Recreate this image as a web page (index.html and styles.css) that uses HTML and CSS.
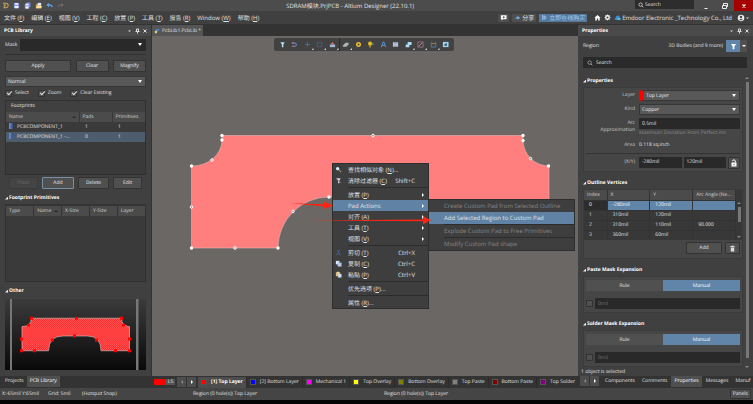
FILE: index.html
```html
<!DOCTYPE html>
<html lang="zh-CN">
<head>
<meta charset="utf-8">
<title>SDRAM模块.PrjPCB - Altium Designer (22.10.1)</title>
<link rel="stylesheet" href="styles.css">
</head>
<body>
<header class="titlebar">
  <div class="quick">
    <svg viewBox="0 0 8 8"><path d="M1 1.500h3.500a2.500 2.500 0 0 1 0 5H2M2 3.500h2.500M2 6.500l1.500-3" fill="none" stroke="#c8a45c" stroke-width="1.200"/></svg>
    <svg viewBox="0 0 8 8"><path d="M1 1h6v6H1z" fill="#8d9be0"/><path d="M2.500 1h3v2h-3zM2 4.500h4V7H2z" fill="#eef0ff"/></svg>
    <svg viewBox="0 0 8 8"><path d="M2.500 0.500h5v5h-5z" fill="#7483cc"/><path d="M1 2h5v5.500H1z" fill="#9daaf0"/><path d="M2 2h3v1.500H2zM2 5h3v2.500H2z" fill="#eef0ff"/></svg>
    <svg viewBox="0 0 8 8"><path d="M1 2.500h2l1 1h3V7H1z" fill="#d9a648"/><path d="M3 1h4v3H3z" fill="#dceaff"/><path d="M2 4.500h6L7 7H1z" fill="#ffe1a0"/></svg>
    <svg viewBox="0 0 8 8"><path d="M1.500 3.500h3.500q2 0 2 2.500" fill="none" stroke="#5fa8e8" stroke-width="1.300"/><path d="M0.500 3.500 3.500 1v5z" fill="#5fa8e8"/></svg>
    <svg viewBox="0 0 8 8"><path d="M6.500 3.500H3.500q-2 0-2 2" fill="none" stroke="#777" stroke-width="1"/><path d="M7.500 3.500 5 1.500v4z" fill="#777"/></svg>
  </div>
  <h1>SDRAM模块.PrjPCB - Altium Designer (22.10.1)</h1>
  <div class="title-right">
    <label class="title-search"><svg viewBox="0 0 8 8"><circle cx="3.500" cy="3.500" r="2.300" fill="none" stroke="#ddd"/><path d="m5.200 5.200 2 2" stroke="#ddd"/></svg><input type="text" placeholder="Search" aria-label="Search"></label>
    <button class="win" aria-label="Minimize"><svg viewBox="0 0 8 8"><path d="M2.500 6.500h3" stroke="#eee"/></svg></button>
    <button class="win" aria-label="Restore"><svg viewBox="0 0 8 8"><path d="M2.500 3V1.500h4V4.500H5M1.500 3.500h4v3h-4z" fill="none" stroke="#eee"/></svg></button>
    <button class="win close" aria-label="Close"><svg viewBox="0 0 8 8"><path d="m2.500 2.500 3 3m0-3-3 3" stroke="#fff" stroke-width="1.100"/></svg></button>
  </div>
</header>

<nav class="menubar">
  <div class="menus">
    <a href="#">文件 (<u>F</u>)</a><a href="#">编辑 (<u>E</u>)</a><a href="#">视图 (<u>V</u>)</a><a href="#">工程 (<u>C</u>)</a><a href="#">放置 (<u>P</u>)</a><a href="#">工具 (<u>T</u>)</a><a href="#">报告 (<u>R</u>)</a><a href="#">Window (<u>W</u>)</a><a href="#">帮助 (<u>H</u>)</a>
  </div>
  <div class="account">
    <button class="chip" aria-label="Comment"><svg viewBox="0 0 8 8"><path d="M1 1.500h6.500V6h-4L2 7.500V6H1z" fill="#fff"/><path d="M4.200 2.500v2.600M3 3.800h2.500" stroke="#444" stroke-width=".8"/></svg></button>
    <button class="chip"><svg viewBox="0 0 8 8"><path d="M1 5.500q1-2 3-2V2l3 2.500L4 6.500V5.200z" fill="#76aee6"/></svg>分享</button>
    <button class="chip buy"><svg viewBox="0 0 8 8"><path d="M2 1v6M3.500 2l2.500 2-2.500 2z" fill="none" stroke="#a9cff3"/></svg>立即在线购买</button>
    <svg class="glyph home" viewBox="0 0 8 8"><path d="M4 1 7.500 4.300H6.500V7.500H4.700V5.200H3.300v2.300H1.500V4.300H.5z" fill="#fff"/></svg>
    <svg class="glyph" viewBox="0 0 8 8"><circle cx="4" cy="4" r="2" fill="none" stroke="#fff" stroke-width="1.500"/><path d="M4 .7v1M4 6.300v1M.7 4h1M6.300 4h1M1.700 1.700l.7.7M5.600 5.600l.7.7M6.300 1.700l-.7.7M2.400 5.600l-.7.7" stroke="#fff"/></svg>
    <a class="company" href="#"><svg viewBox="0 0 8 8"><path d="M1 6.500q-.8-1.500 1-2.500Q2.500 1.500 5 1.800q1.500.3 1.500 2 1.500.7 1 2.700z" fill="#3b8fe0"/><path d="M3 6.500Q4 3.500 7.500 5v1.500z" fill="#62d0b1"/></svg>Emdoor Electronic _Technology Co., Ltd</a>
    <button class="user" aria-label="User"><svg viewBox="0 0 12 8"><circle cx="4" cy="4" r="3.300" fill="#eee"/><circle cx="4" cy="3" r="1.200" fill="#444"/><path d="M2 6.200q2-2.400 4 0z" fill="#444"/><path d="M9 3.500h3L10.500 5z" fill="#ddd"/></svg></button>
  </div>
</nav>

<main class="workspace">
  <aside class="panel left">
    <header class="panel-head"><h2>PCB Library</h2><svg class="tools" viewBox="0 0 20 8"><path d="M1 3.500h3L2.500 5z" fill="#ddd"/><path d="M9.500 2h2v2.500h-2zM8.500 4.500h4M10.500 4.500V6.500M16.500 2.500l3 3m0-3-3 3" fill="none" stroke="#ddd"/></svg></header>
    <div class="left-body">
      <div class="mask"><label for="mask">Mask</label><span class="select dark"><select id="mask"><option></option></select></span></div>
      <div class="btns top"><button class="btn wide">Apply</button><button class="btn">Clear</button><button class="btn">Magnify</button></div>
      <span class="select"><select aria-label="Mode"><option>Normal</option></select></span>
      <div class="checks"><label><input type="checkbox" checked>Select</label><label><input type="checkbox" checked>Zoom</label><label><input type="checkbox" checked>Clear Existing</label></div>
      <section class="footprints">
        <h3>Footprints</h3>
        <table class="fp">
          <thead><tr><th><i class="sort"></i>Name</th><th>Pads</th><th>Primitives</th></tr></thead>
          <tbody>
            <tr><td><i class="chip-icon"></i>PCBCOMPONENT_1</td><td>1</td><td>1</td></tr>
            <tr class="on"><td><i class="chip-icon"></i>PCBCOMPONENT_1 -...</td><td>0</td><td>1</td></tr>
          </tbody>
        </table>
      </section>
      <div class="btns edit"><button class="btn" disabled>Place</button><button class="btn focus">Add</button><button class="btn">Delete</button><button class="btn">Edit</button></div>
      <h3 class="section">Footprint Primitives</h3>
      <div class="primitives">
        <table class="prim"><thead><tr><th>Type</th><th><i class="sort"></i>Name</th><th>X-Size</th><th>Y-Size</th><th>Layer</th></tr></thead></table>
      </div>
      <h3 class="section">Other</h3>
      <svg class="preview" viewBox="5 298 141 72" preserveAspectRatio="none">
        <defs>
          <linearGradient id="pg" x2="0" y2="1"><stop stop-color="#3b3b3b"/><stop offset="1" stop-color="#090909"/></linearGradient>
          <pattern id="hatch" width="2" height="2" patternUnits="userSpaceOnUse"><path d="M0 0h2v2H0z" fill="#ff0b0b"/><path d="M0 0h1v1H0zM1 1h1v1H1z" fill="#ff7474"/></pattern>
        </defs>
        <path d="M5 298h141v72H5z" fill="url(#pg)"/>
        <path d="M10 298h2v72h-2zM136 298h2.500v72H136z" fill="#777"/>
        <path d="M31.500 317.500h90q0 8 8 8.500v24.500H101q0-15-14-15H63q-14 0-14.500 15H22V326q9 0 9.500-8.500z" fill="url(#hatch)" stroke="#d8b0b0" stroke-width=".7"/>
        <path d="M30 316h3v3h-3zM75 316h3v3h-3zM120 316h3v3h-3zM27 323h3v3h-3zM122 323h3v3h-3zM20 337h3v3h-3zM128 337h3v3h-3zM20 349h3v3h-3zM33 349h3v3h-3zM114 349h3v3h-3zM128 349h3v3h-3zM51 338h3v3h-3zM73 334h3v3h-3zM95 338h3v3h-3z" fill="#f00"/>
      </svg>
    </div>
    <nav class="tabs"><a href="#">Projects</a><a href="#" class="on">PCB Library</a></nav>
  </aside>

  <section class="editor">
    <nav class="doc-tabs"><a href="#"><svg viewBox="0 0 8 8"><path d="M2 2h3.500v2.500H2z" fill="#6a9bd1"/><path d="M4 1h3v3H4z" fill="#447ec0"/><path d="M1 4h3v3H1z" fill="#e4cf6b"/></svg>PcbLib1.PcbLib *</a></nav>
    <div class="canvas">
      <svg class="board" width="425" height="340" viewBox="152 36 425 340">
        <path d="M222 135.500H523V140a26 26 0 0 0 26 26V248H380A51 51 0 0 0 278 248H191.500V166A30 26 0 0 0 222 140z" fill="#ff7f7f" stroke="#e4b4b4" stroke-width=".6"/>
        <g fill="#fff"><circle cx="222" cy="135.500" r="1.700"/><circle cx="222" cy="140" r="1.700"/><circle cx="523" cy="135.500" r="1.700"/><circle cx="523" cy="140.500" r="1.700"/><circle cx="548.500" cy="166" r="1.700"/><circle cx="191.500" cy="166" r="1.700"/><circle cx="191.500" cy="248" r="1.700"/><circle cx="278" cy="248" r="1.700"/><circle cx="329" cy="197" r="1.700"/></g>
        <g fill="#999" stroke="#fff" stroke-width=".9"><circle cx="373" cy="135.500" r="1.300"/><circle cx="212" cy="160" r="1.300"/><circle cx="530.500" cy="158.500" r="1.300"/><circle cx="191.500" cy="207" r="1.300"/><circle cx="235" cy="248" r="1.300"/><circle cx="293" cy="211.500" r="1.300"/></g>
      </svg>
      <div class="toolbar">
        <button aria-label="Filter"><svg viewBox="0 0 8 8"><path d="M1.500 1.500h5L5 4v3H3.300V4z" fill="#b7dff0"/></svg></button>
        <button aria-label="Snap"><svg viewBox="0 0 8 8"><path d="M1 2.500h3.500a1.700 1.700 0 0 1 0 3.500H2" fill="none" stroke="#6ba0d2"/><path d="M1 2h2M1 6h2" stroke="#e57870"/></svg></button>
        <button class="more" aria-label="Move"><svg viewBox="0 0 8 8"><path d="M4 1v6M1 4h6" stroke="#506aa0"/></svg></button>
        <button class="more" aria-label="Select area"><svg viewBox="0 0 8 8"><path d="M1.500 1.500h5v5h-5z" fill="none" stroke="#53699a" stroke-dasharray="1.200 .6"/></svg></button>
        <button class="more line" aria-label="Align"><svg viewBox="0 0 8 8"><path d="M1 4h6v3H1z" fill="#9ebad7"/><path d="M4 1 6 4H2z" fill="#e77b70"/></svg></button>
        <button class="more" aria-label="Body"><svg viewBox="0 0 8 8"><path d="m1 5 3-3h3.500v2L5 6.500H1z" fill="#abb6b8"/></svg></button>
        <button aria-label="Pad"><svg viewBox="0 0 8 8"><circle cx="4" cy="4" r="2" fill="none" stroke="#edc22e" stroke-width="1.800"/></svg></button>
        <button aria-label="Via"><svg viewBox="0 0 8 8"><circle cx="3.500" cy="3" r="2.300" fill="#e7bd20"/><path d="M3.500 5v2.500" stroke="#e7bd20" stroke-width="1.200"/><path d="M5 3.500h3" stroke="#6fc463"/></svg></button>
        <button aria-label="String"><svg viewBox="0 0 8 8"><path d="m1.500 7 2.200-6h.7l2.200 6M2.500 5h3" fill="none" stroke="#5b98dc" stroke-width="1.100"/></svg></button>
        <button aria-label="Comment"><svg viewBox="0 0 8 8"><path d="M1 1.500h6v5H1z" fill="#bec6dc"/><path d="M2 3h4M2 5h3" stroke="#8c97b2" stroke-width=".6"/></svg></button>
        <button class="more" aria-label="Region"><svg viewBox="0 0 8 8"><path d="M3 1h4.500v3.500H5V7H.8V4H3z" fill="#acdcf2"/></svg></button>
        <button class="more" aria-label="Line"><svg viewBox="0 0 8 8"><path d="M1 1h6v6H1z" fill="none" stroke="#a26f8e"/><path d="m2 6 4-4" stroke="#a0a47d"/></svg></button>
        <button class="more" aria-label="Dimension"><svg viewBox="0 0 8 8"><path d="M1.500 1v6h5V1" fill="none" stroke="#527eb6"/><path d="M2 3h4" stroke="#a78e6a"/></svg></button>
        <button aria-label="Cutout"><svg viewBox="0 0 8 8"><path d="M1 1h6.500v6H1z" fill="#9dd3e9"/><path d="M3 3.500 5.500 2.500v3H3z" fill="#244f6b"/></svg></button>
      </div>
      <div class="menu context" role="menu">
        <button><svg viewBox="0 0 8 8"><circle cx="3" cy="3" r="1.900" fill="#d9eef7"/><path d="m4.500 4.500 2.500 2.500" stroke="#b98b62" stroke-width="1.300"/></svg><span>查找相似对象 (<u>N</u>)...</span></button>
        <button><svg viewBox="0 0 8 8"><path d="M1.500 1.500h5L5 4v3H3.500V4z" fill="#b9dced"/><path d="m1.500 1.500 2.500 3" stroke="#df6a60"/><path d="m4.500 5 2 2" stroke="#df6a60"/></svg><span>清除过滤器 (<u>C</u>)</span><kbd>Shift+C</kbd></button>
        <hr>
        <button class="sub"><span>放置 (<u>P</u>)</span></button>
        <button class="sub on"><span>Pad Actions</span></button>
        <button class="sub"><span>对齐 (<u>A</u>)</span></button>
        <button class="sub"><span>工具 (<u>T</u>)</span></button>
        <button class="sub"><span>视图 (<u>V</u>)</span></button>
        <hr>
        <button><svg viewBox="0 0 8 8"><path d="m2.500 1 3 5M5.500 1l-3 5" stroke="#456f9a" stroke-width=".9"/><path d="M1.500 6.500h1.500M5 6.500h1.500" stroke="#456f9a"/></svg><span>剪切 (<u>T</u>)</span><kbd>Ctrl+X</kbd></button>
        <button><svg viewBox="0 0 8 8"><path d="M1 1h4v4H1z" fill="#dfe8fa"/><path d="M3 3h4.500v4.500H3z" fill="#b8c8e9"/></svg><span>复制 (<u>C</u>)</span><kbd>Ctrl+C</kbd></button>
        <button><svg viewBox="0 0 8 8"><path d="M1 1.500h5V6H1z" fill="#e4bf76"/><path d="M2.500.8h2v1.400h-2z" fill="#e8e8e8"/><path d="M3.500 3.500h4v4h-4z" fill="#c9dcf2"/></svg><span>粘贴 (<u>P</u>)</span><kbd>Ctrl+V</kbd></button>
        <hr>
        <button><span>优先选项 (<u>P</u>)...</span></button>
        <hr>
        <button><span>属性 (<u>R</u>)...</span></button>
      </div>
      <div class="menu submenu" role="menu">
        <button disabled>Create Custom Pad from Selected Outline</button>
        <button class="on">Add Selected Region to Custom Pad</button>
        <hr>
        <button disabled>Explode Custom Pad to Free Primitives</button>
        <hr>
        <button disabled>Modify Custom Pad shape</button>
      </div>
      <svg class="arrows" width="425" height="340" viewBox="152 36 425 340"><path d="M290 203.300 324 204.200V201.500l9 4-9 3.500v-2.500zM306 220.500l117-1v-3.300l8 4-8 4v-3z" fill="#ff2413"/></svg>
    </div>
    <nav class="layers">
      <i class="current"></i><button class="ls">LS</button>
      <div class="pager"><button aria-label="Previous"><i class="tri back"></i></button><button aria-label="Next"><i class="tri"></i></button></div>
      <a href="#" class="on"><i class="sw red"></i>[1] Top Layer</a>
      <a href="#"><i class="sw blue"></i>[2] Bottom Layer</a>
      <a href="#"><i class="sw magenta"></i>Mechanical 1</a>
      <a href="#"><i class="sw yellow"></i>Top Overlay</a>
      <a href="#"><i class="sw olive"></i>Bottom Overlay</a>
      <a href="#"><i class="sw gray"></i>Top Paste</a>
      <a href="#"><i class="sw maroon"></i>Bottom Paste</a>
      <a href="#"><i class="sw purple"></i>Top Solder</a>
    </nav>
  </section>

  <aside class="panel right">
    <header class="panel-head"><h2>Properties</h2><svg class="tools" viewBox="0 0 20 8"><path d="M1 3.500h3L2.500 5z" fill="#ddd"/><path d="M9.500 2h2v2.500h-2zM8.500 4.500h4M10.500 4.500V6.500M16.500 2.500l3 3m0-3-3 3" fill="none" stroke="#ddd"/></svg></header>
    <div class="object"><span>Region</span><span class="scope">3D Bodies (and 9 more)</span><button class="filter" aria-label="Filter"><svg viewBox="0 0 8 8"><path d="M1 1h6L5 3.800V7H3V3.800z" fill="#fff"/></svg></button><button class="filter-more" aria-label="Filter options"><i class="caret"></i></button></div>
    <label class="search"><svg viewBox="0 0 8 8"><circle cx="3.500" cy="3.500" r="2.300" fill="none" stroke="#ccc" stroke-width=".8"/><path d="m5.200 5.200 2 2" stroke="#ccc"/></svg><input type="text" placeholder="Search" aria-label="Search properties"></label>
    <div class="scroller">
      <div class="props">
        <h3 class="section">Properties</h3>
        <div class="card form">
          <label for="layer">Layer</label><span class="select layer"><select id="layer"><option>Top Layer</option></select></span>
          <label for="kind">Kind</label><span class="select"><select id="kind"><option>Copper</option></select></span>
          <label for="arc">Arc<br>Approximation</label><div class="arc"><input id="arc" type="text" value="0.5mil"><small>Maximum Deviation From Perfect Arc</small></div>
          <span class="lab">Area</span><span>0.118 sq.inch</span>
          <hr>
          <label for="x">(X/Y)</label><div class="xy"><input id="x" type="text" value="-280mil"><input type="text" value="120mil" aria-label="Y"><button class="btn" aria-label="Lock"><svg viewBox="0 0 8 8"><path d="M1.500 3.500h5v4h-5z" fill="#fff"/><path d="M2.500 2.200Q2.700.8 4 .8 5.500.8 5.500 3.500" fill="none" stroke="#fff"/><path d="M4 5v1.200" stroke="#444"/></svg></button></div>
        </div>
        <h3 class="section">Outline Vertices</h3>
        <div class="card vertices">
          <div class="grid">
            <table class="vt">
              <thead><tr><th>Index</th><th>X</th><th>Y</th><th>Arc Angle (Ne...</th></tr></thead>
              <tbody>
                <tr class="on"><td>0</td><td>-280mil</td><td>120mil</td><td></td></tr>
                <tr><td>1</td><td>310mil</td><td>120mil</td><td></td></tr>
                <tr><td>2</td><td>310mil</td><td>110mil</td><td>90.000</td></tr>
                <tr><td>3</td><td>360mil</td><td>60mil</td><td></td></tr>
              </tbody>
            </table>
            <div class="vbar"><i class="up"></i><b></b><i class="down"></i></div>
          </div>
          <div class="vt-actions"><button class="btn">Add</button><button class="btn trash" aria-label="Delete"><svg viewBox="0 0 8 8"><path d="M1.500 2h5M3 1.300h2" stroke="#fff"/><path d="M2 3h4v4.500H2z" fill="#ddd"/></svg></button></div>
        </div>
        <h3 class="section">Paste Mask Expansion</h3>
        <div class="card mask-card"><div class="toggle"><button>Rule</button><button class="on">Manual</button></div><div class="value"><input type="checkbox" aria-label="Paste mask tented"><input type="text" placeholder="0mil" aria-label="Paste mask expansion"></div></div>
        <h3 class="section">Solder Mask Expansion</h3>
        <div class="card mask-card"><div class="toggle"><button>Rule</button><button class="on">Manual</button></div><div class="value"><input type="checkbox" aria-label="Solder mask tented"><input type="text" placeholder="0mil" aria-label="Solder mask expansion"></div></div>
      </div>
      <div class="bar"><i class="up"></i><b></b><i class="down"></i></div>
    </div>
    <p class="selected">1 object is selected</p>
    <nav class="tabs"><div class="pager"><button aria-label="Previous"><i class="tri back"></i></button><button aria-label="Next"><i class="tri"></i></button></div><a href="#">Components</a><a href="#">Comments</a><a href="#" class="on">Properties</a><a href="#">Messages</a><a href="#">Manuf</a></nav>
  </aside>
</main>

<footer class="status"><span>X:-65mil Y:65mil</span><span>Grid: 5mil</span><span>(Hotspot Snap)</span><span>Region (0 hole(s)) Top Layer</span><span>Region (0 hole(s)) Top Layer</span><button class="btn">Panels</button></footer>
</body>
</html>
```
FILE: styles.css
```css
* { box-sizing: border-box; }
html, body { height: 100%; }
body {
  margin: 0;
  display: flex;
  flex-direction: column;
  overflow: hidden;
  background: #050505;
  padding-bottom: 4px;
  color: #e2e2e2;
  font: 5px/8px "Open Sans", "Noto Sans CJK SC", sans-serif;
  text-rendering: geometricPrecision;
}
button, input, select { font: inherit; color: inherit; margin: 0; padding: 0; border: 0; min-width: 0; text-rendering: inherit; }
input::placeholder { color: inherit; opacity: 1; }
button { background: none; white-space: nowrap; }
a { color: inherit; text-decoration: none; white-space: nowrap; }
h1, h2, h3, p { margin: 0; font-size: inherit; }
svg { display: block; flex: none; }
hr { margin: 0; border: 0; }

/* Title and menu bars */
.titlebar { display: grid; grid-template-columns: 38% auto 1fr; height: 11px; flex: none; background: #4c4c4c; align-items: center; }
.titlebar h1 { font-size: 6px; font-weight: 400; white-space: nowrap; }
.quick { display: flex; gap: 4px; padding-left: 2px; }
.quick svg { width: 7px; height: 7px; }
.title-right { display: flex; justify-content: flex-end; height: 11px; }
.title-search { display: flex; align-items: center; gap: 1px; width: 59px; height: 9px; padding-left: 3px; margin-right: 2px; background: #2d2d2d; }
.title-search svg { width: 6px; height: 6px; }
.title-search input { width: 40px; background: none; }
.win { width: 19px; display: grid; place-items: center; }
.win svg { width: 8px; height: 8px; }
.win.close { background: #a40000; }
.menubar { display: flex; justify-content: space-between; align-items: center; height: 13px; flex: none; background: #404040; font-size: 6px; }
.menus { display: flex; gap: 7px; padding-left: 4px; }
.account { display: flex; align-items: center; gap: 3px; padding-right: 4px; }
.chip { display: flex; align-items: center; gap: 1px; height: 8px; padding: 0 2px; background: #4e4e4e; }
.chip svg, .glyph, .company svg { width: 7px; height: 7px; }
.chip.buy { background: #55799c; color: #a9cff3; }
.home { margin-left: 4px; }
.company { display: flex; align-items: center; gap: 1px; }
.user { margin-left: 2px; }
.user svg { width: 12px; height: 8px; }

/* Workspace */
.workspace { flex: 1; min-height: 0; display: grid; grid-template-columns: 151px minmax(0, 1fr) 175px; background: #333; }
.panel { display: flex; flex-direction: column; min-width: 0; min-height: 0; background: #404040; }
.panel-head { display: flex; justify-content: space-between; align-items: center; height: 12px; flex: none; padding: 0 4px; background: #4a4a4a; border-top: 1px solid #333; color: #fff; }
.panel-head h2 { font-weight: 700; }
.tools { width: 20px; height: 8px; }
.left-body { display: flex; flex-direction: column; flex: 1; min-height: 0; padding: 3px 5px 6px; }
.btn { height: 12px; background: #505050; border: 1px solid #333; border-radius: 1px; color: #eee; display: grid; place-items: center; }
.btn:disabled { color: #6c6c6c; background: #444; border-color: #3b3b3b; }
.btn.focus { border-color: #7890a6; }
.select { position: relative; display: block; height: 11px; background: #585858; border: 1px solid #363636; color: #eee; }
.select select { appearance: none; display: block; width: 100%; height: 100%; padding-left: 2px; background: none; }
.select::after { content: ""; position: absolute; right: 3px; top: 3px; border: 2px solid transparent; border-top: 3px solid #fff; border-bottom: 0; }
.dark { background: #292929; border-color: #292929; height: 12px; }
.mask { display: grid; grid-template-columns: 15px 1fr; align-items: center; padding-bottom: 3px; border-bottom: 1px solid #303030; }
.btns { display: grid; }
.top { grid-template-columns: 66px 33px 33px; justify-content: space-between; margin: 5px 0 4px; }
.checks { display: flex; gap: 9px; height: 12px; align-items: center; }
.checks label { display: flex; align-items: center; gap: 3px; }
input[type="checkbox"] { appearance: none; width: 7px; height: 7px; background: #505050; border: 1px solid #333; position: relative; flex: none; }
input[type="checkbox"]:checked::after { content: ""; position: absolute; left: 1px; top: 0; width: 4px; height: 2px; border: solid #ddd; border-width: 0 0 1px 1px; transform: rotate(-45deg); }
.footprints { height: 75px; border: 1px solid #303030; background: #3a3a3a; margin-top: 1px; }
.footprints h3 { font-weight: 400; height: 11px; padding: 1px 5px; background: #404040; }
table { width: 100%; border-collapse: collapse; table-layout: fixed; }
th, td { padding: 0; font-weight: 400; text-align: left; height: 10px; white-space: nowrap; overflow: hidden; }
th { background: #4b4b4b; color: #d4d4d4; }
.sort { float: right; margin: 3px 3px 0 0; border: 2px solid transparent; border-bottom: 2px solid #282828; border-top: 0; }
.fp th, .fp td { padding-left: 3px; }
.fp th + th { border-left: 1px solid #383838; }
.fp th:first-child { width: 73px; }
.fp th:nth-child(2) { width: 33px; }
.fp td + td { padding-left: 6px; }
.on td { background: #4d5d6e; }
.chip-icon { display: inline-block; width: 4px; height: 6px; margin-right: 4px; vertical-align: -1px; background: linear-gradient(90deg, #7391d1, #344a80); }
.edit { grid-template-columns: 29px 32px 31px 29px; gap: 4px; padding-left: 4px; margin: 2px 0 4px; }
.section { display: flex; align-items: center; gap: 1px; font-weight: 700; color: #fff; height: 10px; flex: none; }
.section::before { content: ""; width: 3px; height: 3px; background: #eee; clip-path: polygon(100% 0, 100% 100%, 0 100%); }
.primitives { height: 78px; border: 1px solid #303030; border-top: 2px solid #353535; background: #3a3a3a; margin: 1px 0 4px; }
.prim th { padding-left: 3px; border-right: 1px solid #333; }
.prim th:last-child { border: 0; }
.preview { width: 100%; flex: 1; min-height: 0; margin-top: 3px; }
.tabs { display: flex; height: 12px; flex: none; background: #333; overflow: hidden; }
.tabs a { padding: 1px 3px; height: 11px; }
.tabs .on { background: #4f4f4f; color: #fff; }
.left .tabs { padding-left: 2px; }

/* Editor */
.editor { display: flex; flex-direction: column; min-width: 0; min-height: 0; padding-left: 1px; }
.doc-tabs { display: flex; height: 12px; padding-top: 1px; flex: none; }
.doc-tabs a { display: flex; align-items: center; gap: 2px; padding: 0 2px; background: #555; }
.doc-tabs svg { width: 6px; height: 6px; }
.canvas { position: relative; flex: 1; min-height: 0; background: #6b6765; overflow: hidden; }
.board, .arrows { position: absolute; left: 0; top: 0; }
.arrows { pointer-events: none; }
.toolbar { position: absolute; left: 122px; top: 2px; display: flex; width: 180px; height: 13px; padding: 0 2px; background: #424242; border-radius: 2px; }
.toolbar button { position: relative; flex: 1; display: grid; place-items: center; }
.toolbar svg { width: 7px; height: 7px; }
.more::after { content: ""; position: absolute; right: 0; bottom: 1px; width: 2px; height: 2px; background: #ddd; clip-path: polygon(100% 0, 100% 100%, 0 100%); }
.line { border-right: 1px solid #2c2c2c; }
.menu { position: absolute; background: #3e3e3e; border: 1px solid #2e2e2e; font-size: 6px; display: flex; flex-direction: column; }
.menu button { display: grid; grid-template-columns: 15px 1fr auto; align-items: center; height: 11px; text-align: left; padding-right: 13px; }
.menu svg { width: 7px; height: 7px; margin-left: 2px; grid-column: 1; grid-row: 1; }
.menu span { grid-column: 2; }
.menu kbd { font: inherit; }
.menu hr { height: 3px; margin-left: 15px; border-top: 1px solid #3e3e3e; border-bottom: 1px solid #3e3e3e; background: #2c2c2c; }
.menu .on { background: #5f82a5; }
.context { left: 180px; top: 127px; width: 97px; }
.sub { position: relative; }
.sub::after { content: ""; position: absolute; right: 4px; top: 4px; border: 2px solid transparent; border-left: 2px solid #fff; border-right: 0; }
.submenu { left: 276px; top: 163px; width: 147px; }
.menu.submenu button { display: block; height: 12px; padding: 0 0 0 15px; }
.submenu hr { height: 1px; border: 0; }
.menu.submenu button:disabled { color: #868686; }
.layers { display: flex; align-items: center; height: 12px; flex: none; overflow: hidden; padding-left: 2px; }
.current { width: 12px; height: 6px; background: #f00; flex: none; }
.ls { width: 9px; height: 6px; line-height: 6px; background: #555; flex: none; }
.pager { display: flex; flex: none; gap: 1px; margin: 0 2px; }
.pager button { width: 9px; height: 10px; background: #4d4d4d; display: grid; place-items: center; }
.tri { border: 2px solid transparent; border-left: 2px solid #fff; border-right: 0; }
.back { border-left: 0; border-right: 2px solid #888; }
.layers a { display: flex; align-items: center; gap: 4px; height: 11px; padding: 0 3px; border-right: 1px solid #2a2a2a; }
.layers .on { background: #4d4d4d; color: #fff; font-weight: 700; }
.sw { width: 6px; height: 6px; border: 1px solid #555; }
.red { background: #f00; } .blue { background: #00f; } .magenta { background: #f0f; } .yellow { background: #ff0; }
.olive { background: #808000; } .gray { background: #808080; } .maroon { background: #800000; } .purple { background: #800080; }

/* Properties */
.object { display: flex; align-items: center; height: 20px; flex: none; padding: 0 6px 0 5px; }
.scope { margin-left: auto; margin-right: 3px; }
.filter { width: 14px; height: 12px; background: #6085a9; display: grid; place-items: center; }
.filter svg { width: 7px; height: 7px; }
.filter-more { width: 7px; height: 12px; background: #505050; display: grid; place-items: center; }
.caret { border: 2px solid transparent; border-top: 2px solid #fff; border-bottom: 0; }
.search { display: flex; align-items: center; gap: 3px; height: 11px; flex: none; margin: 1px 6px 0 5px; padding-left: 4px; background: #2a2a2a; }
.search svg { width: 6px; height: 6px; }
.search input { background: none; width: 100px; }
.scroller { display: flex; flex: 1; min-height: 0; padding: 8px 4px 0 5px; gap: 2px; }
.props { flex: 1; min-width: 0; }
.card { background: #464646; border: 1px solid #3b3b3b; margin: 1px 0 6px; }
.props input[type="text"] { height: 11px; padding-left: 3px; background: #292929; width: 100%; }
.form { display: grid; grid-template-columns: 49px minmax(0, 1fr); column-gap: 4px; row-gap: 3px; padding: 2px; height: 85px; }
.form label, .lab { text-align: right; line-height: 7px; color: #c8c8c8; }
.form > label { padding-top: 2px; }
.layer { border-left: 5px solid #f00; }
.arc { height: 20px; }
.arc input, .arc small { display: block; }
.arc small { font-size: inherit; color: #8c8c8c; white-space: nowrap; }
.form > span { line-height: 8px; height: 8px; }
.form > .select { height: 11px; }
.form hr { grid-column: 1 / -1; height: 1px; background: #333; }
.xy { display: grid; grid-template-columns: 1fr 1fr 12px; gap: 2px; }
.xy svg { width: 8px; height: 8px; }
.vertices { background: #464646; height: 70px; }
.grid { display: flex; background: #383838; }
.vt th, .vt td { padding-left: 3px; border-right: 1px solid #333; }
.vt th:first-child { width: 23px; }
.vt td { border-top: 1px solid #333; padding-left: 5px; }
.vt .on td { background: #6085a9; color: #fff; }
.vt .on td:first-child { background: #2d2d2d; }
.vbar, .bar { display: flex; flex-direction: column; align-items: center; flex: none; }
.vbar { width: 6px; padding: 12px 0 2px; }
.vbar b { width: 3px; height: 15px; margin-top: 3px; background: #777; }
.bar { width: 4px; padding-top: 1px; }
.bar b { width: 3px; flex: 1; margin: 3px 0 8px; background: #777; }
.up { border: 2px solid transparent; border-bottom: 2px solid #888; border-top: 0; }
.down { margin-top: auto; border: 2px solid transparent; border-top: 2px solid #888; border-bottom: 0; }
.vt-actions { display: flex; justify-content: flex-end; gap: 3px; padding: 2px 2px 0; }
.vt-actions .btn { width: 36px; }
.vt-actions .trash { width: 15px; }
.trash svg { width: 7px; height: 7px; }
.mask-card { padding: 3px 2px; height: 37px; }
.toggle { display: grid; grid-template-columns: 1fr 1fr; height: 11px; background: #505050; }
.toggle .on { background: #6085a9; color: #fff; }
.value { display: flex; align-items: center; gap: 2px; margin-top: 7px; color: #747474; }
.selected { height: 8px; flex: none; padding-left: 3px; }
.right .tabs { padding-left: 2px; gap: 1px; }
.right .pager { margin: 0 2px 0 0; }

/* Status bar */
.status { display: grid; grid-template-columns: 46px 34px 111px 191px 1fr auto; align-items: center; height: 12px; flex: none; padding: 0 2px; background: #454545; white-space: nowrap; }
.status .btn { height: 10px; padding: 0 2px; }
```
